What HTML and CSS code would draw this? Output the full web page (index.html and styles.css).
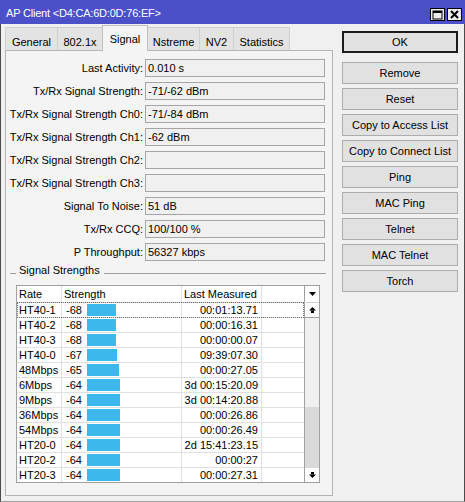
FILE: index.html
```html
<!DOCTYPE html>
<html>
<head>
<meta charset="utf-8">
<link rel="stylesheet" href="styles.css">
</head>
<body>
<div class="window">
  <div class="titlebar">
    <span class="title">AP Client &lt;D4:CA:6D:0D:76:EF&gt;</span>
    <div class="wbtns">
      <span class="wbtn"><svg width="11" height="10" viewBox="0 0 11 10"><rect x="1" y="1" width="9" height="8" fill="none" stroke="#000" stroke-width="1"/><rect x="1" y="1" width="9" height="2" fill="#000"/></svg></span>
      <span class="wbtn"><svg width="9" height="9" viewBox="0 0 9 9"><path d="M1 1 L8 8 M8 1 L1 8" stroke="#000" stroke-width="2"/></svg></span>
    </div>
  </div>
  <div class="main">
    <div class="left">
      <div class="tabbar">
        <div class="tab t-general">General</div>
        <div class="tab t-8021x">802.1x</div>
        <div class="tab t-signal active">Signal</div>
        <div class="tab t-nstreme">Nstreme</div>
        <div class="tab t-nv2">NV2</div>
        <div class="tab t-stats">Statistics</div>
      </div>
      <div class="panel">
        <div class="form">
          <div class="lbl">Last Activity:</div><div class="box">0.010 s</div>
          <div class="lbl">Tx/Rx Signal Strength:</div><div class="box">-71/-62 dBm</div>
          <div class="lbl">Tx/Rx Signal Strength Ch0:</div><div class="box">-71/-84 dBm</div>
          <div class="lbl">Tx/Rx Signal Strength Ch1:</div><div class="box">-62 dBm</div>
          <div class="lbl">Tx/Rx Signal Strength Ch2:</div><div class="box"></div>
          <div class="lbl">Tx/Rx Signal Strength Ch3:</div><div class="box"></div>
          <div class="lbl">Signal To Noise:</div><div class="box">51 dB</div>
          <div class="lbl">Tx/Rx CCQ:</div><div class="box">100/100 %</div>
          <div class="lbl">P Throughput:</div><div class="box">56327 kbps</div>
        </div>
        <div class="group">
          <span class="gline gline-short"></span>
          <span class="gtext">Signal Strengths</span>
          <span class="gline gline-long"></span>
        </div>
        <div class="table">
          <div class="thead">
            <div class="hc c-rate">Rate</div>
            <div class="hc c-str">Strength</div>
            <div class="hc c-lm">Last Measured</div>
            <div class="hc c-empty"></div>
            <div class="hc c-arrow"><svg width="7" height="4" viewBox="0 0 7 4"><polygon points="0,0 7,0 3.5,4" fill="#000"/></svg></div>
          </div>
          <div class="tbody">
            <div class="rows">
              <div class="row focus"><div class="cell">HT40-1</div><div class="cell str"><span class="val">-68</span><span class="bar" style="width:29px"></span></div><div class="cell lm">00:01:13.71</div><div class="cell"></div></div>
              <div class="row"><div class="cell">HT40-2</div><div class="cell str"><span class="val">-68</span><span class="bar" style="width:29px"></span></div><div class="cell lm">00:00:16.31</div><div class="cell"></div></div>
              <div class="row"><div class="cell">HT40-3</div><div class="cell str"><span class="val">-68</span><span class="bar" style="width:29px"></span></div><div class="cell lm">00:00:00.07</div><div class="cell"></div></div>
              <div class="row"><div class="cell">HT40-0</div><div class="cell str"><span class="val">-67</span><span class="bar" style="width:30px"></span></div><div class="cell lm">09:39:07.30</div><div class="cell"></div></div>
              <div class="row"><div class="cell">48Mbps</div><div class="cell str"><span class="val">-65</span><span class="bar" style="width:32px"></span></div><div class="cell lm">00:00:27.05</div><div class="cell"></div></div>
              <div class="row"><div class="cell">6Mbps</div><div class="cell str"><span class="val">-64</span><span class="bar" style="width:33px"></span></div><div class="cell lm">3d 00:15:20.09</div><div class="cell"></div></div>
              <div class="row"><div class="cell">9Mbps</div><div class="cell str"><span class="val">-64</span><span class="bar" style="width:33px"></span></div><div class="cell lm">3d 00:14:20.88</div><div class="cell"></div></div>
              <div class="row"><div class="cell">36Mbps</div><div class="cell str"><span class="val">-64</span><span class="bar" style="width:33px"></span></div><div class="cell lm">00:00:26.86</div><div class="cell"></div></div>
              <div class="row"><div class="cell">54Mbps</div><div class="cell str"><span class="val">-64</span><span class="bar" style="width:33px"></span></div><div class="cell lm">00:00:26.49</div><div class="cell"></div></div>
              <div class="row"><div class="cell">HT20-0</div><div class="cell str"><span class="val">-64</span><span class="bar" style="width:33px"></span></div><div class="cell lm">2d 15:41:23.15</div><div class="cell"></div></div>
              <div class="row"><div class="cell">HT20-2</div><div class="cell str"><span class="val">-64</span><span class="bar" style="width:33px"></span></div><div class="cell lm">00:00:27</div><div class="cell"></div></div>
              <div class="row"><div class="cell">HT20-3</div><div class="cell str"><span class="val">-64</span><span class="bar" style="width:33px"></span></div><div class="cell lm">00:00:27.31</div><div class="cell"></div></div>
            </div>
            <div class="scroll">
              <div class="sbtn sbtn-up"><svg width="7" height="6" viewBox="0 0 7 6"><polygon points="3.5,0 7,3.5 0,3.5" fill="#000"/><rect x="2" y="3.5" width="3" height="2.5" fill="#000"/></svg></div>
              <div class="strack"></div>
              <div class="sthumb"></div>
              <div class="sbtn sbtn-down"><svg width="7" height="6" viewBox="0 0 7 6"><rect x="2" y="0" width="3" height="2.5" fill="#000"/><polygon points="0,2.5 7,2.5 3.5,6" fill="#000"/></svg></div>
            </div>
          </div>
        </div>
      </div>
    </div>
    <div class="actions">
      <div class="btn btn-ok">OK</div>
      <div class="btn">Remove</div>
      <div class="btn">Reset</div>
      <div class="btn">Copy to Access List</div>
      <div class="btn">Copy to Connect List</div>
      <div class="btn">Ping</div>
      <div class="btn">MAC Ping</div>
      <div class="btn">Telnet</div>
      <div class="btn">MAC Telnet</div>
      <div class="btn">Torch</div>
    </div>
  </div>
</div>
</body>
</html>
```
FILE: styles.css
```css
* { box-sizing: border-box; }
html, body { margin: 0; padding: 0; }
body {
  background: #f0f0f0;
  font-family: "Liberation Sans", Arial, sans-serif;
  font-size: 11px;
  color: #000;
}
.window {
  width: 465px;
  height: 502px;
  display: flex;
  flex-direction: column;
}
.titlebar {
  height: 24px;
  flex: none;
  background: #4b50c9;
  display: flex;
  align-items: flex-start;
}
.title {
  color: #fff;
  font-size: 11px;
  line-height: 14px;
  padding: 6px 0 0 6px;
  letter-spacing: -0.2px;
}
.wbtns {
  margin-left: auto;
  margin-right: 3px;
  margin-top: 8px;
  display: flex;
  gap: 2px;
}
.wbtn {
  width: 15px;
  height: 13px;
  border: 1px solid #000;
  background: #ececec;
  display: flex;
  align-items: center;
  justify-content: center;
}
.main {
  flex: 1;
  display: flex;
  border-left: 1px solid #4a4a4a;
  border-right: 1px solid #4a4a4a;
  border-bottom: 1px solid #a0a0a0;
  padding: 1px 0 0 4px;
}
.left {
  width: 328px;
  flex: none;
}
.tabbar {
  height: 25px;
  display: flex;
  align-items: flex-end;
}
.tab {
  height: 23px;
  border: 1px solid #d0d0d0;
  border-bottom: none;
  background: #e3e3e3;
  text-align: center;
  line-height: 14px;
  padding-top: 7px;
  margin-left: -1px;
}
.tab:first-child { margin-left: 0; }
.tab.active {
  height: 26px;
  margin-bottom: -1px;
  background: #f4f4f4;
  padding-top: 6px;
  position: relative;
  z-index: 1;
  border-color: #c0c0c0;
}
.t-general { width: 53px; }
.t-8021x { width: 46px; }
.t-signal { width: 46px; }
.t-nstreme { width: 53px; }
.t-nv2 { width: 35px; }
.t-stats { width: 57px; }
.panel {
  height: 446px;
  border: 1px solid #b4b4b4;
  background: #f4f4f4;
  padding-top: 8px;
}
.form {
  display: grid;
  grid-template-columns: 137px 180px;
  column-gap: 2px;
  row-gap: 5px;
  grid-auto-rows: 18px;
}
.lbl {
  text-align: right;
  line-height: 18px;
  white-space: nowrap;
}
.box {
  border: 1px solid #a5a5a5;
  background: #f0f0f0;
  line-height: 16px;
  padding-left: 2px;
  white-space: nowrap;
}
.group {
  display: flex;
  height: 15px;
  margin-top: 2px;
  margin-bottom: 7px;
  padding-left: 4px;
  padding-right: 6px;
}
.gline {
  height: 1px;
  background: #a0a0a0;
  margin-top: 10px;
}
.gline-short { width: 6px; }
.gline-long { flex: 1; }
.gtext {
  line-height: 15px;
  padding: 0 4px 0 3px;
  white-space: nowrap;
}
.table {
  margin-left: 10px;
  width: 304px;
  border: 1px solid #a0a0a0;
  background: #fff;
}
.thead {
  display: flex;
  height: 17px;
  border-bottom: 1px solid #d0d0d0;
}
.hc {
  line-height: 16px;
  padding-left: 2px;
  border-right: 1px solid #e0e0e0;
  white-space: nowrap;
}
.c-rate { width: 45px; }
.c-str { width: 120px; }
.c-lm { width: 80px; }
.c-empty { width: 42px; border-right: none; }
.c-arrow {
  width: 15px;
  border-right: none;
  border-left: 1px solid #a0a0a0;
  padding: 0;
  display: flex;
  align-items: center;
  justify-content: center;
}
.tbody { display: flex; }
.rows { width: 287px; }
.row {
  display: grid;
  grid-template-columns: 45px 120px 80px 42px;
  height: 15px;
  border-bottom: 1px solid #e0e0e0;
  position: relative;
}
.row:last-child { height: 14px; border-bottom: none; }
.row.focus::after {
  content: "";
  position: absolute;
  left: 0;
  right: 0;
  top: -1px;
  bottom: -1px;
  border: 1px dotted #707070;
}
.cell {
  line-height: 14px;
  padding-left: 2px;
  border-right: 1px solid #e0e0e0;
  white-space: nowrap;
  overflow: hidden;
}
.cell:last-child { border-right: none; }
.cell.str {
  display: flex;
  align-items: flex-start;
  padding-left: 4px;
}
.val { width: 21px; flex: none; }
.bar {
  height: 12px;
  margin-top: 1px;
  background: #3db8ec;
  flex: none;
}
.cell.lm {
  text-align: right;
  padding-right: 3px;
}
.scroll {
  width: 15px;
  border-left: 1px solid #a0a0a0;
  display: flex;
  flex-direction: column;
}
.sbtn {
  background: #fff;
  display: flex;
  align-items: center;
  justify-content: center;
}
.sbtn-up { height: 15px; border-bottom: 1px solid #a0a0a0; }
.sbtn-down { height: 14px; }
.strack { height: 89px; background: #f0f0f0; }
.sthumb { height: 61px; background: #d9d9d9; }
.actions {
  margin-left: 9px;
  margin-top: 6px;
  width: 116px;
  display: flex;
  flex-direction: column;
  gap: 4px;
}
.btn {
  height: 22px;
  border: 1px solid #adadad;
  background: #e1e1e1;
  text-align: center;
  line-height: 20px;
  white-space: nowrap;
}
.btn-ok {
  border: 2px solid #1c1c1c;
  line-height: 18px;
  margin-bottom: 5px;
}
```
